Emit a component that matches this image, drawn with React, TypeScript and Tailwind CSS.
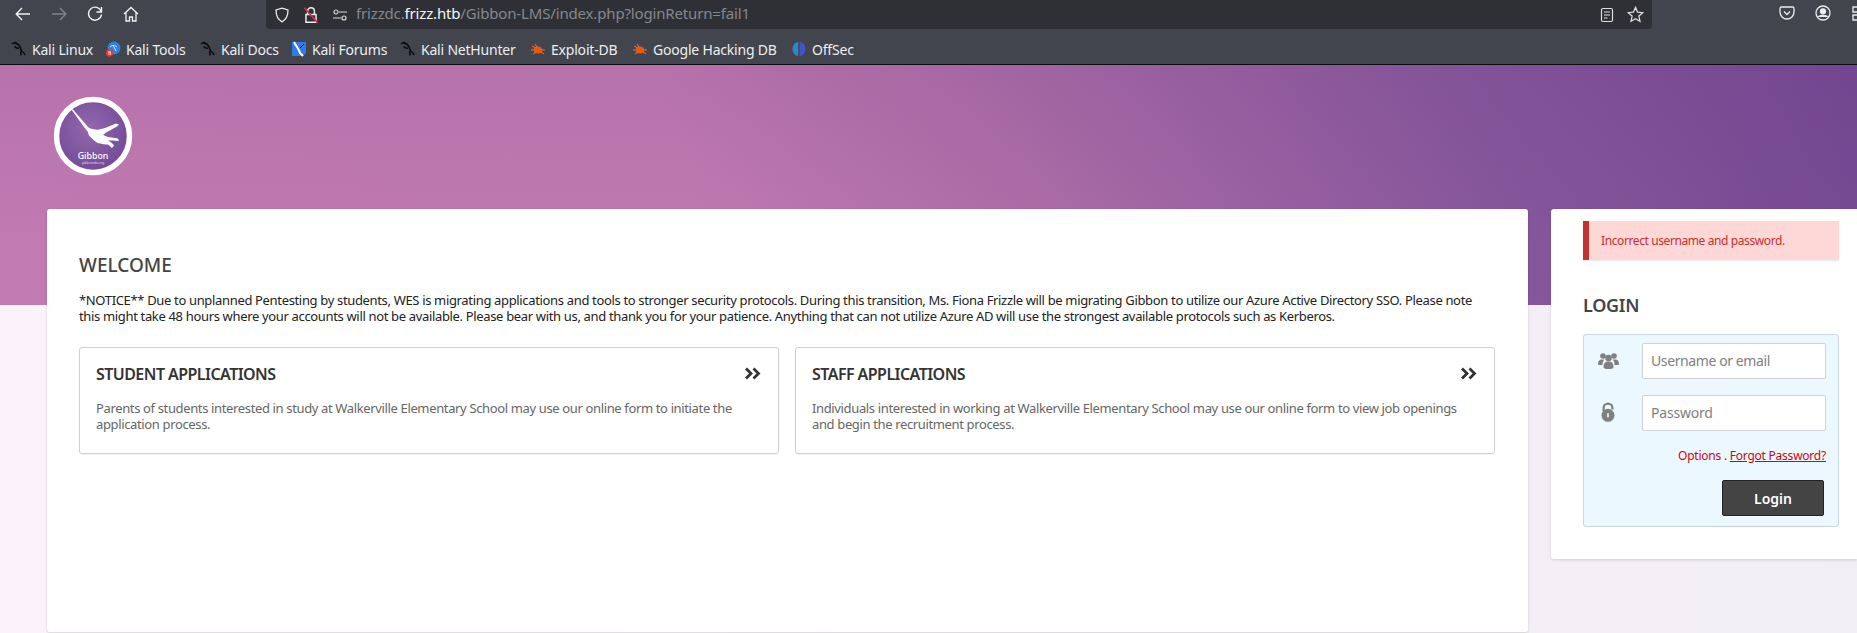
const uiFont = "font-['Noto_Sans',sans-serif]";

// Little black dragon used for the Kali bookmarks
function KaliIcon() {
  return (
    <svg viewBox="0 0 16 16" className="h-4 w-4 shrink-0" fill="none" stroke="#0b0b0b" strokeWidth="1.500">
      <path d="M1 2.500c3-1 6 0 7.500 2.500 1.200 1.800 1 3.600 2.200 5 1 1.200 2.600 1.600 3.300 4" />
      <path d="M3.500 1 6 3M8 7C6.500 7.500 5 7 3.500 5.500M10.500 9.500c-1.200 1-1 2.600-.4 5" />
    </svg>
  );
}

function ToolsIcon() {
  return (
    <svg viewBox="0 0 16 16" className="h-4 w-4 shrink-0">
      <circle cx="9" cy="7" r="6.500" fill="#2f81e0" />
      <path d="M5 6c2-2 5-2 7 0M8 4l3 6" stroke="#cfe6ff" strokeWidth="1" fill="none" />
      <circle cx="4.500" cy="12" r="3.700" fill="#e23b2e" />
      <path d="M3 10.800h3M4 10.800v3M5.400 10.800v3" stroke="#fff" strokeWidth=".7" />
    </svg>
  );
}

function ForumsIcon() {
  return (
    <svg viewBox="0 0 16 16" className="h-4 w-4 shrink-0">
      <path d="M1 1h14v11l-3 3H1z" fill="#2f7be8" />
      <path d="M3 1c2 4 5 7 6 11l3 3" stroke="#fff" strokeWidth="2" fill="none" />
      <path d="M9 7 13 3" stroke="#111" strokeWidth="1" />
    </svg>
  );
}

function BugIcon() {
  return (
    <svg viewBox="0 0 16 16" className="h-4 w-4 shrink-0">
      <ellipse cx="8" cy="9" rx="4.200" ry="3.600" fill="#e8590c" />
      <path d="M2 5l4 2M14 13l-3-2M3 13l3-2M5 3l2 3M1 9h3M12 9h3" stroke="#e8793c" strokeWidth="1" />
    </svg>
  );
}

function OffSecIcon() {
  return (
    <svg viewBox="0 0 16 16" className="h-4 w-4 shrink-0">
      <path d="M7.300 1C3.500 1.400 1.500 4.400 1.500 8s2 6.600 5.800 7z" fill="#2d86c9" />
      <path d="M8.700 1c3.800.4 5.800 3.400 5.800 7s-2 6.600-5.800 7z" fill="#3f55c4" />
    </svg>
  );
}

function Bookmark({ icon, label, width }: { icon: React.ReactNode; label: string; width: string }) {
  return (
    <div className={"flex items-center gap-[5px] " + width}>
      {icon}
      <span className="whitespace-nowrap text-[14px] tracking-[-0.2px] text-[#eceef0]">{label}</span>
    </div>
  );
}

function BrowserBar() {
  return (
    <div className={"h-[65px] border-b border-[#0c0c0d] bg-[#42454e] " + uiFont}>
      <div className="flex h-[34px] items-start">
        <div className="flex w-[266px] shrink-0 items-center gap-[20px] pl-[15px] pt-[6px]">
          <svg viewBox="0 0 16 16" className="h-4 w-4" fill="none" stroke="#f2f2f3" strokeWidth="1.400">
            <path d="M15 8H1.500M7 2 1.200 8 7 14" />
          </svg>
          <svg viewBox="0 0 16 16" className="h-4 w-4" fill="none" stroke="#80838a" strokeWidth="1.400">
            <path d="M1 8h13.500M9 2l5.800 6L9 14" />
          </svg>
          <svg viewBox="0 0 16 16" className="h-4 w-4" fill="none" stroke="#f2f2f3" strokeWidth="1.400">
            <path d="M14.200 5.500A6.500 6.500 0 1 0 14.500 8.500M14.500 1v5h-5" />
          </svg>
          <svg viewBox="0 0 16 16" className="h-4 w-4" fill="none" stroke="#f2f2f3" strokeWidth="1.300">
            <path d="M1 8 8 1.500 15 8M3 6.500V15h3.500v-4h3v4H13V6.500" />
          </svg>
        </div>

        <div className="flex h-[29px] w-[1386px] shrink-0 items-center rounded-b-[4px] bg-[#2f3036] px-[8px]">
          <svg viewBox="0 0 16 16" className="h-4 w-4" fill="none" stroke="#e8e8ea" strokeWidth="1.300">
            <path d="M8 1.200 14 3c0 5.500-1.500 9.500-6 11.800C3.500 12.500 2 8.500 2 3z" />
          </svg>
          <svg viewBox="0 0 16 16" className="ml-[12px] h-[18px] w-[18px]" fill="none">
            <path d="M5 7V4.500a3 3 0 0 1 6 0V7M3.500 7.500h9v7h-9z" stroke="#ececee" strokeWidth="1.300" />
            <path d="M2 1.500 14 15" stroke="#e22850" strokeWidth="1.400" />
          </svg>
          <svg viewBox="0 0 16 16" className="ml-[12px] h-4 w-4" fill="none" stroke="#d9d9dc" strokeWidth="1.200">
            <path d="M7 5h8M1 11h8" />
            <circle cx="4" cy="5" r="2" />
            <circle cx="12" cy="11" r="2" />
          </svg>
          <span className="ml-[8px] mt-[-2px] text-[15px] tracking-[-0.16px] text-[#85878c]">
            frizzdc.<span className="text-[#f5f5f6]">frizz.htb</span>/Gibbon-LMS/index.php?loginReturn=fail1
          </span>
          <div className="ml-auto flex items-center gap-[12px]">
            <svg viewBox="0 0 16 16" className="h-4 w-4" fill="none" stroke="#dedee0" strokeWidth="1.200">
              <rect x="2.500" y="1.500" width="11" height="13" rx="1.500" />
              <path d="M5 5h6M5 8h6M5 11h3.500" />
            </svg>
            <svg viewBox="0 0 16 16" className="h-[17px] w-[17px]" fill="none" stroke="#dedee0" strokeWidth="1.200">
              <path d="m8 1.300 2 4.500 4.800.5-3.600 3.200 1 4.800L8 11.900l-4.200 2.400 1-4.800L1.200 6.300 6 5.800z" />
            </svg>
          </div>
        </div>

        <div className="ml-[127px] flex items-center gap-[20px] pt-[5px]">
          <svg viewBox="0 0 16 16" className="h-4 w-4 shrink-0" fill="none" stroke="#ececee" strokeWidth="1.300">
            <path d="M2.500 2h11A1.500 1.500 0 0 1 15 3.500V7a7 7 0 0 1-14 0V3.500A1.500 1.500 0 0 1 2.500 2z" />
            <path d="m5 6.500 3 3 3-3" />
          </svg>
          <svg viewBox="0 0 16 16" className="h-4 w-4 shrink-0" fill="none" stroke="#ececee" strokeWidth="1.300">
            <circle cx="8" cy="8" r="7" />
            <circle cx="8" cy="6.300" r="2.500" fill="#ececee" />
            <path d="M3.500 12c1-2 8-2 9 0" fill="#ececee" />
          </svg>
          <svg viewBox="0 0 16 16" className="h-4 w-4 shrink-0" fill="none" stroke="#ececee" strokeWidth="1.300">
            <path d="M2 2h5v5H2zM2 10h5v5H2zM10 5h5" />
          </svg>
        </div>
      </div>

      <div className="flex h-[30px] items-center pl-[11px]">
        <Bookmark icon={<KaliIcon />} label="Kali Linux" width="w-[94px]" />
        <Bookmark icon={<ToolsIcon />} label="Kali Tools" width="w-[95px]" />
        <Bookmark icon={<KaliIcon />} label="Kali Docs" width="w-[91px]" />
        <Bookmark icon={<ForumsIcon />} label="Kali Forums" width="w-[109px]" />
        <Bookmark icon={<KaliIcon />} label="Kali NetHunter" width="w-[130px]" />
        <Bookmark icon={<BugIcon />} label="Exploit-DB" width="w-[102px]" />
        <Bookmark icon={<BugIcon />} label="Google Hacking DB" width="w-[159px]" />
        <Bookmark icon={<OffSecIcon />} label="OffSec" width="w-[70px]" />
      </div>
    </div>
  );
}

function GibbonLogo() {
  return (
    <svg viewBox="0 0 80 80" className="h-20 w-20">
      <defs>
        <radialGradient id="logoFill" cx="45%" cy="40%" r="65%">
          <stop offset="0%" stopColor="#9468ae" />
          <stop offset="100%" stopColor="#6f4795" />
        </radialGradient>
      </defs>
      <circle cx="40" cy="40" r="36.500" fill="url(#logoFill)" stroke="#fff" strokeWidth="5.500" />
      <path
        d="M18 13 20 13.500 35 31C37 33 40 33 42 33.500 46 34 49 33 52 32L63 27.500 66 28.500 64 30.500 54 36C52 37 51 38.500 50 39L55 41 65 42.500 66 45 59 44.500 55 44.500C57 46 60 47 61 49.500L59 52 55 48.500C52 48.500 49 48 47 47.500 43 47 41 44 38.500 42 36 40 35 38 35 36L31 31Z"
        fill="#fff"
      />
      <text x="40" y="63" textAnchor="middle" fontSize="8.800" fontWeight="500" fill="#fff" fontFamily="Noto Sans, sans-serif">
        Gibbon
      </text>
      <text x="40" y="67.500" textAnchor="middle" fontSize="3.200" fill="#e6d9ee" fontFamily="Noto Sans, sans-serif">
        gibbonedu.org
      </text>
    </svg>
  );
}

function DoubleChevron() {
  return (
    <svg viewBox="0 0 17 13" className="h-[13px] w-[17px]" fill="none" stroke="#333" strokeWidth="2.800">
      <path d="M2 1.500 7 6.500 2 11.500M9.500 1.500 14.500 6.500 9.500 11.500" />
    </svg>
  );
}

function AppCard({ title, children }: { title: string; children: React.ReactNode }) {
  return (
    <div className="h-[107px] w-[700px] rounded-[3px] border border-[#cbd0d6] px-[16px] pt-[15px] shadow-[0_1px_1px_rgba(0,0,0,0.05)]">
      <div className="flex h-[22px] items-center justify-between">
        <h3 className="text-[16px] font-semibold tracking-[-0.55px] text-[#333]">{title}</h3>
        <div className="mb-[2px] mr-[1px]">
          <DoubleChevron />
        </div>
      </div>
      <p className="mt-[15px] text-[13px] leading-[16px] tracking-[-0.36px] text-[#666]">{children}</p>
    </div>
  );
}

function UsersIcon() {
  return (
    <svg viewBox="0 0 21 17" className="h-[17px] w-[21px]" fill="#808080">
      <circle cx="5" cy="4" r="2.800" />
      <circle cx="16" cy="4" r="2.800" />
      <circle cx="10.500" cy="6" r="3.300" />
      <path d="M0 12c0-3 1.500-4.500 3.500-4.500h2.800C5 9 4.500 10.500 4.500 13H1.500C.5 13 0 12.800 0 12zM21 12c0-3-1.500-4.500-3.500-4.500h-2.800C16 9 16.500 10.500 16.500 13h3c1 0 1.500-.2 1.500-1z" />
      <path d="M5.500 15c0-3.500 1.500-5.500 5-5.500s5 2 5 5.500c0 1.500-1.500 2-5 2s-5-.5-5-2z" />
    </svg>
  );
}

function OpenLock() {
  return (
    <svg viewBox="0 0 14 20" className="h-[20px] w-[14px]" fill="#808080">
      <path d="M1.500 9V6a5.500 5.500 0 0 1 11 0v1.500h-2.200V6a3.300 3.300 0 0 0-6.600 0v3z" />
      <circle cx="7" cy="13.300" r="6.500" />
      <rect x="6.200" y="11.300" width="1.600" height="4" fill="#ebf8ff" />
    </svg>
  );
}

export default function App() {
  return (
    <div className={"h-[633px] overflow-hidden bg-[linear-gradient(to_right,#fbf3f9,#f2eef6)] " + uiFont}>
      <BrowserBar />

      <header className="h-[240px] bg-[linear-gradient(to_bottom,rgba(115,60,130,0.13),rgba(115,60,130,0)_75%),linear-gradient(68deg,#c27ab2_0%,#c07ab1_38%,#ab6ca7_56%,#87579c_78%,#724892_100%)] pl-[53px] pt-[31px]">
        <GibbonLogo />
      </header>

      <main className="mt-[-96px] flex gap-[23px] pl-[47px]">
        <section className="h-[423px] w-[1481px] shrink-0 rounded-[3px] bg-white px-[32px] pt-[42px] shadow-[0_1px_3px_rgba(0,0,0,0.14)]">
          <h2 className="text-[19px] font-medium leading-[28px] text-[#444]">WELCOME</h2>
          <p className="mt-[13px] whitespace-nowrap text-[13px] leading-[16px] tracking-[-0.34px] text-[#222]">
            *NOTICE** Due to unplanned Pentesting by students, WES is migrating applications and tools to stronger security protocols. During this transition, Ms. Fiona Frizzle will be migrating Gibbon to utilize our Azure Active Directory SSO. Please note
            <br />
            this might take 48 hours where your accounts will not be available. Please bear with us, and thank you for your patience. Anything that can not utilize Azure AD will use the strongest available protocols such as Kerberos.
          </p>
          <div className="mt-[23px] flex gap-[16px]">
            <AppCard title="STUDENT APPLICATIONS">
              Parents of students interested in study at Walkerville Elementary School may use our online form to initiate the application process.
            </AppCard>
            <AppCard title="STAFF APPLICATIONS">
              Individuals interested in working at Walkerville Elementary School may use our online form to view job openings and begin the recruitment process.
            </AppCard>
          </div>
        </section>

        <aside className="h-[350px] w-[306px] shrink-0 rounded-l-[3px] bg-white pl-[32px] pr-[18px] pt-[12px] shadow-[0_1px_3px_rgba(0,0,0,0.14)]">
          <div className="flex h-[39px] items-center border-l-[6px] border-[#c53030] bg-[#fed7d7] pl-[12px] text-[12px] tracking-[-0.4px] text-[#c53030] shadow-[0_1px_2px_rgba(0,0,0,0.1)]">
            Incorrect username and password.
          </div>
          <h2 className="mt-[32px] text-[18px] font-semibold leading-[26px] tracking-[-0.3px] text-[#444]">LOGIN</h2>
          <div className="mt-[16px] h-[193px] rounded-[3px] border border-[#cbd5e0] bg-[#ebf8ff] pl-[14px] pr-[12px] pt-[8px]">
            <div className="flex h-[36px] items-center">
              <div className="mb-[2px]">
                <UsersIcon />
              </div>
              <input
                placeholder="Username or email"
                className="ml-[23px] h-[36px] w-[184px] rounded-[2px] border border-[#cfd3d8] bg-white pb-[2px] pl-[8px] text-[14px] tracking-[-0.4px] placeholder:text-[#808080]"
              />
            </div>
            <div className="mt-[16px] flex h-[36px] items-center">
              <div className="mb-[2px] ml-[3px]">
                <OpenLock />
              </div>
              <input
                placeholder="Password"
                className="ml-[27px] h-[36px] w-[184px] rounded-[2px] border border-[#cfd3d8] bg-white pb-[2px] pl-[8px] text-[14px] tracking-[-0.2px] placeholder:text-[#808080]"
              />
            </div>
            <p className="mt-[16px] text-right text-[12px] leading-[18px] tracking-[-0.23px] text-[#d8000c]">
              Options . <a className="underline">Forgot Password?</a>
            </p>
            <div className="mt-[15px] flex justify-end pr-[2px]">
              <button type="button" className="h-[36px] w-[102px] rounded-[2px] border border-[#222] bg-[#444] text-[14px] font-semibold text-white">
                Login
              </button>
            </div>
          </div>
        </aside>
      </main>
    </div>
  );
}
